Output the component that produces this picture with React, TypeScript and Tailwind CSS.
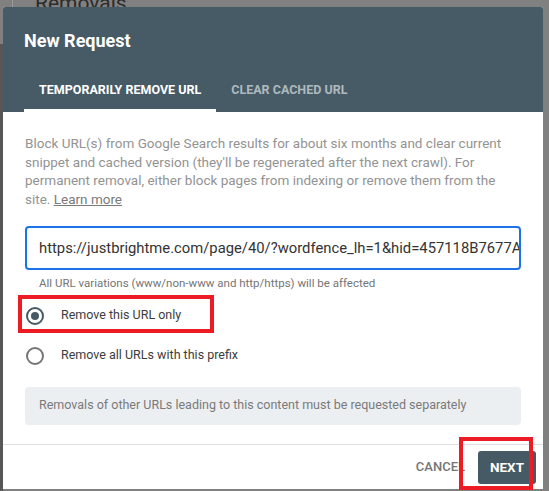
import React from "react";

export default function App() {
  const font = { fontFamily: "Roboto, 'Noto Sans', Arial, sans-serif" };
  return (
    <div className="relative w-[549px] h-[491px] overflow-hidden bg-[#808080]" style={font}>
      {/* background page (dimmed by overlay) */}
      <div className="absolute left-0 top-[44px] w-[3px] h-[447px] bg-[#575757]" />
      <div className="absolute left-[12px] top-0 w-px h-[8px] bg-[#9a9a9a]" />
      <div className="absolute left-[35px] top-[-9px] text-[21px] leading-[24px] text-[#2b2b2b]">Removals</div>
      <div className="absolute left-[62px] top-[488px] text-[15px] leading-[18px] font-bold text-[#1e1e1e] whitespace-nowrap">
        Submitted requests will appear here
      </div>

      {/* dialog */}
      <div className="absolute left-[3px] top-[7px] w-[540px] h-[482px] bg-white rounded-t-[2px] flex flex-col overflow-hidden">
        {/* header */}
        <div className="bg-[#475b66] h-[105px] flex flex-col px-[21px]">
          <div className="pt-[22px] text-[18px] leading-[24px] font-bold text-white">New Request</div>
          <div className="mt-[11px] flex">
            <div className="relative h-[48px] px-[15px] pt-[4px] flex items-center text-[12.5px] font-bold text-white">
              TEMPORARILY REMOVE URL
              <div className="absolute left-0 right-0 bottom-0 h-[3px] bg-white" />
            </div>
            <div className="h-[48px] px-[15px] pt-[4px] flex items-center text-[12.5px] font-bold text-[#aeb9bf]">
              CLEAR CACHED URL
            </div>
          </div>
        </div>

        {/* body */}
        <div className="px-[22px] pt-[22px] pb-[19px] flex flex-col">
          <p className="text-[13.5px] leading-[18.67px] text-[#939393]">
            Block URL(s) from Google Search results for about six months and clear current snippet and cached version
            (they'll be regenerated after the next crawl). For permanent removal, either block pages from indexing or
            remove them from the site. <span className="underline text-[#7a7a7a]">Learn more</span>
          </p>
          <div className="mt-[17px] h-[44px] border-2 border-[#1a73e8] rounded-[4px] px-[12px] flex items-center overflow-hidden">
            <span className="text-[14.8px] text-[#333333] whitespace-nowrap">
              https://justbrightme.com/page/40/?wordfence_lh=1&amp;hid=457118B7677A3C2F
            </span>
          </div>
          <div className="mt-[6px] pl-[14px] text-[11.5px] leading-[14px] text-[#757575]">
            All URL variations (www/non-www and http/https) will be affected
          </div>
          <div className="mt-[6px] flex flex-col">
            <div className="h-[40px] flex items-center">
              <div className="ml-[1px] w-[18px] h-[18px] rounded-full border-2 border-[#455a64] flex items-center justify-center">
                <div className="w-[8px] h-[8px] rounded-full bg-[#455a64]" />
              </div>
              <span className="ml-[17px] text-[12.5px] text-[#3c3c3c]">Remove this URL only</span>
            </div>
            <div className="h-[40px] flex items-center">
              <div className="ml-[1px] w-[18px] h-[18px] rounded-full border-2 border-[#757575]" />
              <span className="ml-[17px] text-[12.5px] text-[#3c3c3c]">Remove all URLs with this prefix</span>
            </div>
          </div>
          <div className="mt-[11px] h-[38px] rounded-[4px] bg-[#eceff1] px-[14px] flex items-center text-[12.5px] text-[#7a7a7a]">
            Removals of other URLs leading to this content must be requested separately
          </div>
        </div>

        {/* footer */}
        <div className="border-t border-[#e0e0e0] flex justify-end items-start pt-[6px] pr-[7px]">
          <div className="h-[33px] px-[10px] mr-[3px] flex items-center text-[13px] font-medium text-[#757575]">CANCEL</div>
          <div className="h-[33px] w-[58px] rounded-[3px] bg-[#455a64] flex items-center justify-center text-[13.5px] font-bold text-white">
            NEXT
          </div>
        </div>
      </div>

      {/* red annotation boxes */}
      <div className="absolute left-[18px] top-[295px] w-[196px] h-[38px] border-[4px] border-[#ed1c24]" />
      <div className="absolute left-[459px] top-[437px] w-[74px] h-[53px] border-[4px] border-[#ed1c24]" />
    </div>
  );
}
